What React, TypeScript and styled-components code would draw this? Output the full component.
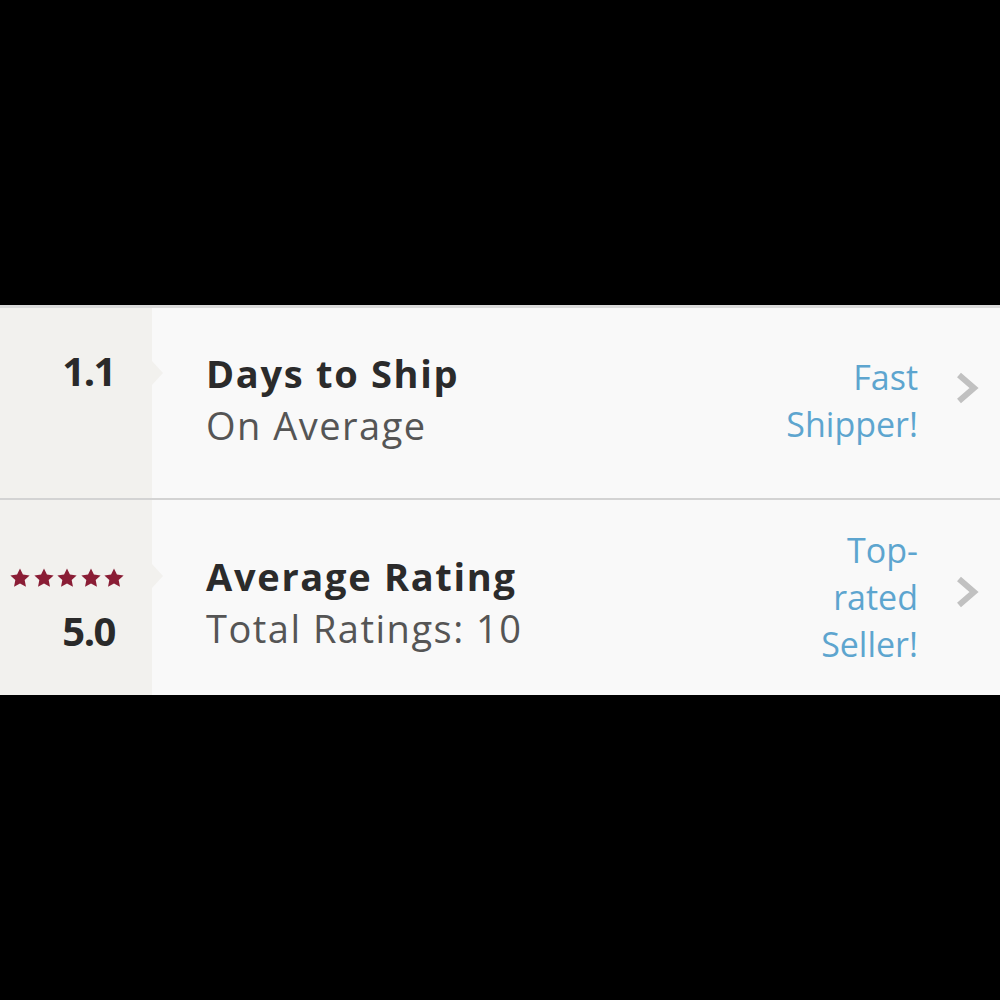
import styled, { createGlobalStyle } from 'styled-components';

const GlobalStyle = createGlobalStyle`
  html, body {
    margin: 0;
    padding: 0;
    background: #000;
  }
  body {
    font-family: "Open Sans", Lato, sans-serif;
  }
`;

const StarIcon = () => (
  <svg width="22" height="22" viewBox="0 0 24 24">
    <path
      d="M12 1.5l3.2 6.8 7.3.9-5.4 5.1 1.4 7.3L12 18l-6.5 3.6 1.4-7.3-5.4-5.1 7.3-.9z"
      fill="#8a1d35"
    />
  </svg>
);

const Chevron = () => (
  <svg width="26" height="32" viewBox="0 0 26 32">
    <path d="M4 3l15 13L4 29" fill="none" stroke="#c1c1c1" strokeWidth="6" />
  </svg>
);

const rows = [
  {
    value: '1.1',
    stars: false,
    title: 'Days to Ship',
    sub: 'On Average',
    badge: ['Fast', 'Shipper!'],
    height: 190,
    leftShift: -64,
    mainShift: -11,
    badgeShift: -5,
    chevronShift: -30,
  },
  {
    value: '5.0',
    stars: true,
    title: 'Average Rating',
    sub: 'Total Ratings: 10',
    badge: ['Top-', 'rated', 'Seller!'],
    height: 195,
    leftShift: 22,
    mainShift: 7,
    badgeShift: 0,
    chevronShift: -12,
  },
];

const App = () => {
  return (
    <>
      <GlobalStyle />
      <Page>
        <Band />
        <Panel>
          {rows.map((r) => (
            <Row key={r.title} $height={r.height}>
              <LeftCell $shift={r.leftShift}>
                {r.stars && (
                  <Stars>
                    {[0, 1, 2, 3, 4].map((i) => (
                      <StarIcon key={i} />
                    ))}
                  </Stars>
                )}
                <Value>{r.value}</Value>
              </LeftCell>
              <Main $shift={r.mainShift}>
                <Title>{r.title}</Title>
                <Sub>{r.sub}</Sub>
              </Main>
              <Badge $shift={r.badgeShift}>
                {r.badge.map((line) => (
                  <div key={line}>{line}</div>
                ))}
              </Badge>
              <ChevronCell $shift={r.chevronShift}>
                <Chevron />
              </ChevronCell>
            </Row>
          ))}
        </Panel>
        <Band />
      </Page>
    </>
  );
};

export default App;

const shiftPadding = (shift: number) =>
  `padding-top: ${shift > 0 ? shift : 0}px; padding-bottom: ${shift < 0 ? -shift : 0}px;`;

const Page = styled.div`
  display: flex;
  flex-direction: column;
  min-height: 1000px;
`;

const Band = styled.div`
  flex: 1;
  background: #000;
`;

const Panel = styled.div`
  background: #f9f9f9;
  border-top: 3px solid #dadada;
`;

const Row = styled.div<{ $height: number }>`
  position: relative;
  display: flex;
  align-items: stretch;
  height: ${(p) => p.$height}px;
  & + & {
    border-top: 2px solid #d3d3d3;
  }
`;

const LeftCell = styled.div<{ $shift: number }>`
  position: relative;
  width: 152px;
  flex-shrink: 0;
  box-sizing: border-box;
  background: #f2f1ee;
  display: flex;
  flex-direction: column;
  justify-content: center;
  align-items: flex-end;
  padding-right: 37px;
  ${(p) => shiftPadding(p.$shift)}
`;

const Stars = styled.div`
  display: flex;
  gap: 1.5px;
  margin-right: -10px;
  margin-bottom: 22px;
`;

const Value = styled.div`
  font-size: 40px;
  font-weight: 700;
  color: #2a2a2a;
  line-height: 40px;
  letter-spacing: -1.5px;
`;

const Main = styled.div<{ $shift: number }>`
  flex: 1;
  display: flex;
  flex-direction: column;
  justify-content: center;
  padding-left: 54px;
  ${(p) => shiftPadding(p.$shift)}
`;

const Title = styled.div`
  position: relative;
  font-size: 38px;
  font-weight: 700;
  color: #2b2b2b;
  line-height: 54px;
  letter-spacing: 1.7px;
  &::before {
    content: '';
    position: absolute;
    left: -54px;
    top: 50%;
    margin-top: -12px;
    border-top: 12px solid transparent;
    border-bottom: 12px solid transparent;
    border-left: 11px solid #f2f1ee;
  }
`;

const Sub = styled.div`
  font-size: 38px;
  font-weight: 400;
  color: #555;
  line-height: 50px;
  letter-spacing: 1.5px;
`;

const Badge = styled.div<{ $shift: number }>`
  align-self: center;
  text-align: right;
  font-size: 34px;
  line-height: 47px;
  color: #5da5cf;
  ${(p) => shiftPadding(p.$shift)}
`;

const ChevronCell = styled.div<{ $shift: number }>`
  width: 82px;
  display: flex;
  align-items: center;
  justify-content: flex-start;
  padding-left: 37px;
  box-sizing: border-box;
  ${(p) => shiftPadding(p.$shift)}
`;
